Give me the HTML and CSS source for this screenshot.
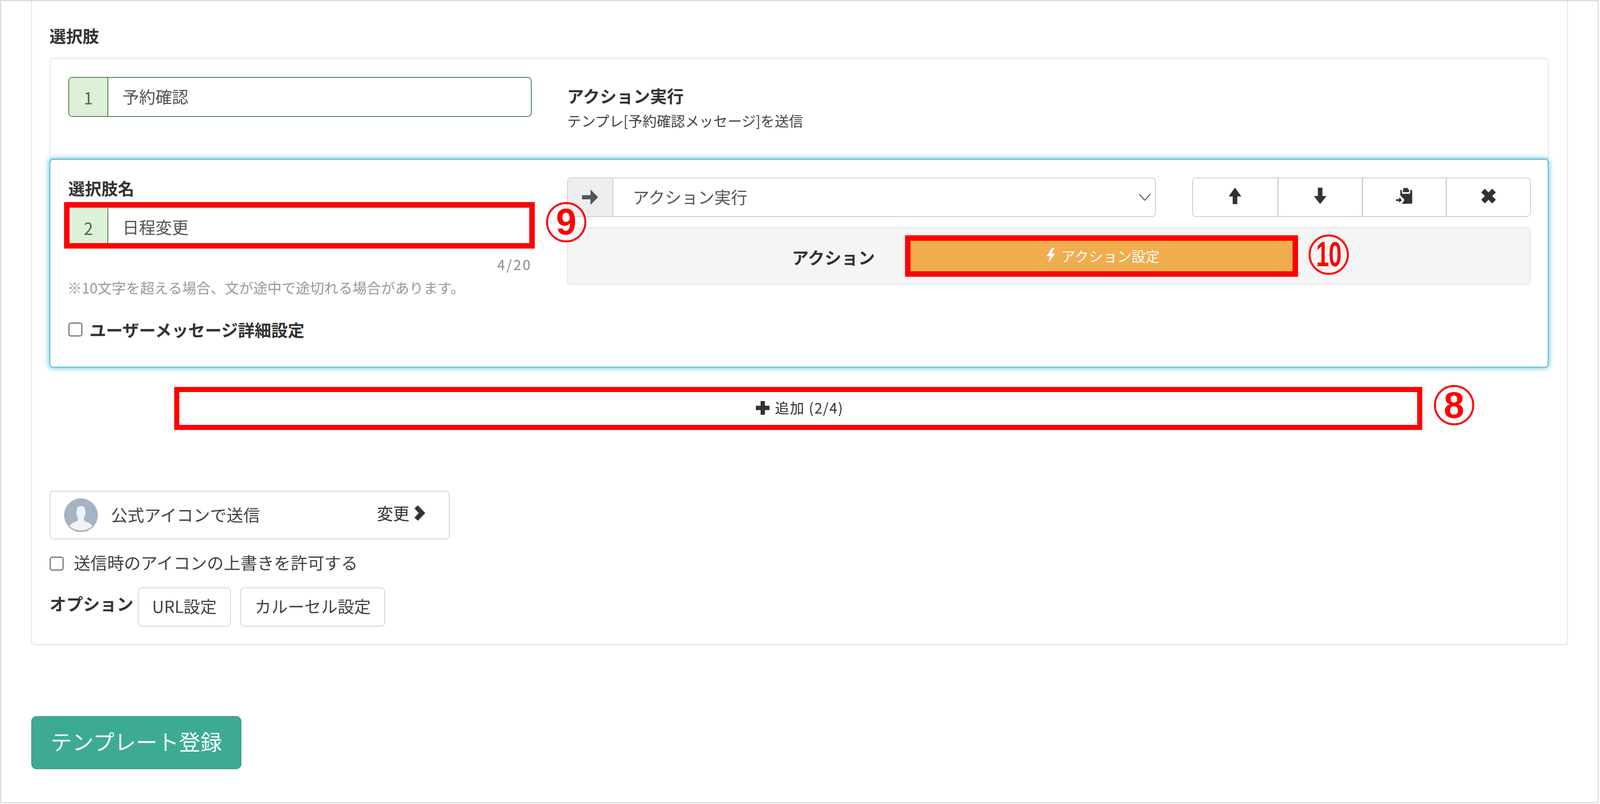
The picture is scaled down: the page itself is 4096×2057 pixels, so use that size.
FILE: index.html
```html
<!DOCTYPE html>
<html lang="ja">
<head>
<meta charset="utf-8">
<title>テンプレート登録</title>
<link rel="stylesheet" href="styles.css">
</head>
<body>
<div class="page">
  <section class="card">
    <h2 class="section-label">選択肢</h2>

    <div class="choice choice-closed">
      <div class="col-left">
        <div class="name-input success"><span class="num">1</span><span class="name-text">予約確認</span></div>
      </div>
      <div class="col-right summary">
        <div class="summary-title">アクション実行</div>
        <div class="summary-sub">テンプレ[予約確認メッセージ]を送信</div>
      </div>
    </div>

    <div class="choice choice-open">
      <div class="col-left">
        <div class="field-label">選択肢名</div>
        <div class="name-wrap">
          <div class="name-input active"><span class="num">2</span><span class="name-text">日程変更</span></div>
          <div class="mark mark-name"></div>
          <div class="badge badge-9"><span class="badge-digit">9</span></div>
        </div>
        <div class="counter">4/20</div>
        <div class="note">※10文字を超える場合、文が途中で途切れる場合があります。</div>
        <label class="detail-check"><input type="checkbox" class="check"><span>ユーザーメッセージ詳細設定</span></label>
      </div>
      <div class="col-right">
        <div class="control-row">
          <div class="select-group">
            <div class="select-addon">
              <svg class="addon-icon" viewBox="0 0 44 44"><path d="M1 16.500h22V2l20 20-20 20V27.500H1z"/></svg>
            </div>
            <div class="select-box">
              <span>アクション実行</span>
              <svg class="caret" viewBox="0 0 30 18"><path d="M1 1l14 16L29 1" fill="none" stroke="#555" stroke-width="2.500"/></svg>
            </div>
          </div>
          <div class="btn-group">
            <button class="tool" type="button"><svg class="tool-icon" viewBox="-5 0 44 44"><path d="M17 0l16.500 23H23v20H11V23H.5z"/></svg></button>
            <button class="tool" type="button"><svg class="tool-icon" viewBox="-5 0 44 44"><path d="M11 0h12v22h10.500L17 43 .5 22H11z"/></svg></button>
            <button class="tool" type="button"><svg class="tool-icon" viewBox="-1 -1 44 44"><path d="M19 0h12v4h3v7H18V4h1zM11 5h4v7c0 2 1 3 3 3h16c2 0 3-1 3-3V5h3c1 0 2 1 2 2v32c0 1-1 2-2 2H15l7-10-11-12zM0 29h8v-5l7 7.500-7 7.500v-5H0z"/></svg></button>
            <button class="tool" type="button"><svg class="tool-icon" viewBox="-3 -3 46 46"><path d="M10 0l10 10L30 0l10 10-10 10 10 10-10 10-10-10-10 10L0 30l10-10L0 10z"/></svg></button>
          </div>
        </div>
        <div class="action-panel">
          <div class="action-label">アクション</div>
          <div class="action-wrap">
            <button class="action-btn" type="button">
              <svg class="bolt" viewBox="0 0 24 38"><path d="M15 0L2 21h8L6 38l17-24h-9l8-14z"/></svg>
              <span>アクション設定</span>
            </button>
            <div class="mark mark-action"></div>
            <div class="badge badge-10"><span class="badge-digit digit-wide">10</span></div>
          </div>
        </div>
      </div>
    </div>

    <div class="add-wrap">
      <button class="add-btn" type="button">
        <svg class="plus" viewBox="0 0 35 35"><path d="M12 1c0-1 1-1 2-1h7c1 0 2 0 2 1v11h11c1 0 1 1 1 2v7c0 1 0 2-1 2H23v11c0 1-1 1-2 1h-7c-1 0-2 0-2-1V23H1c-1 0-1-1-1-2v-7c0-1 0-2 1-2h11z"/></svg>
        <span>追加 (2/4)</span>
      </button>
      <div class="mark mark-add"></div>
      <div class="badge badge-8"><span class="badge-digit">8</span></div>
    </div>

    <div class="sender">
      <svg class="avatar" viewBox="0 0 88 88">
        <circle cx="44" cy="44" r="44" fill="#a5b4c2"/>
        <path d="M44 20c-7 0-11 4-11 11l-1 8c-1 1 0 3 1 4 1 3 2 6 3 8v6c-2 3-5 4-9 5-4 1-9 4-13 10a44 44 0 0 0 60 0c-4-6-9-9-13-10-4-1-7-2-9-5v-6c1-2 2-5 3-8 1-1 2-3 1-4l-1-8c0-7-4-11-11-11z" fill="#eff2f6"/>
      </svg>
      <span class="sender-name">公式アイコンで送信</span>
      <span class="sender-change">変更<svg class="chevron" viewBox="0 0 28 40"><path d="M9 0l19 20L9 40l-9-8 11-12L0 8z"/></svg></span>
    </div>

    <label class="override-check"><input type="checkbox" class="check"><span>送信時のアイコンの上書きを許可する</span></label>

    <div class="options">
      <span class="options-label">オプション</span>
      <button class="opt-btn opt-url" type="button">URL設定</button>
      <button class="opt-btn opt-carousel" type="button">カルーセル設定</button>
    </div>
  </section>

  <button class="submit" type="button">テンプレート登録</button>
</div>
</body>
</html>
```
FILE: styles.css
```css
* { box-sizing: border-box; }
html, body { margin: 0; padding: 0; background: #fff; overflow: hidden; }
body { font-family: "Noto Sans CJK JP", "Noto Sans", sans-serif; color: #333; }
button { font-family: inherit; margin: 0; cursor: pointer; }

/* the reference is 4170 wide, the window 4096.
   Border widths are floored after zoom, hence the .1 on each of them. */
.page {
  zoom: 0.98225;
  width: 4167px;
  height: 2092px;
  border: 3.100px solid #ddd;
  font-size: 43.700px;
  display: flex;
  flex-direction: column;
  align-items: flex-start;
  padding-left: 78px;
}

.card {
  width: 4005px;
  height: 1677px;
  border: 2.100px solid #e3e3e3;
  border-top: 0;
  border-radius: 0 0 10px 10px;
  box-shadow: 0 2px 3px rgba(0,0,0,.05);
  padding: 60px 47px 0 46px;
  flex: none;
}

.section-label {
  margin: 0 0 28px;
  font-size: 43px;
  line-height: 60px;
  font-weight: 700;
}

.choice {
  display: grid;
  grid-template-columns: 1208px 2512px;
  column-gap: 92px;
  background: #fff;
}
.choice-closed {
  height: 263px;
  padding: 47px 0 0 47px;
  border: 2.100px solid #e3e3e3;
  border-radius: 10px 10px 0 0;
}
.choice-open {
  position: relative;
  height: 545px;
  margin-top: -1px;
  margin-left: -1px;
  padding: 46px 0 0 47px;
  border: 3.100px solid #6cc3e0;
  border-radius: 10px;
  box-shadow: 0 0 13px 2px rgba(91,192,222,.8);
}

.name-input {
  display: flex;
  height: 104px;
  border-radius: 10px;
  overflow: hidden;
  background: #fff;
}
.name-input.success { border: 2.100px solid #3c763d; }
.name-input.active { border: 2.100px solid #ccc; }
.num {
  width: 102px;
  flex: none;
  display: flex;
  align-items: center;
  justify-content: center;
  background: #dff0d8;
  color: #3c763d;
  border-right: 2.100px solid #3c763d;
}
.name-text {
  padding: 0 0 5px 37px;
  display: flex;
  align-items: center;
  color: #555;
  font-size: 43px;
}

.summary { padding-top: 19px; }
.summary-title { font-weight: 700; line-height: 60px; }
.summary-sub { margin-top: 10px; font-size: 37px; line-height: 50px; color: #444; }

.field-label { font-weight: 700; line-height: 54px; margin-bottom: 24px; font-size: 43px; }
.name-wrap { position: relative; }

.counter {
  margin-top: 21px;
  text-align: right;
  font-size: 36px;
  line-height: 46px;
  color: #888;
  letter-spacing: 4px;
}
.note {
  margin-top: 13px;
  margin-left: -2px;
  font-size: 37px;
  line-height: 50px;
  color: #999;
}
.detail-check {
  display: flex;
  align-items: center;
  margin-top: 56px;
  height: 56px;
  font-weight: 700;
  font-size: 43.400px;
  gap: 18px;
}
.check {
  appearance: none;
  width: 37px;
  height: 37px;
  margin: 0;
  flex: none;
  background: #fff;
  border: 3.100px solid #767676;
  border-radius: 7px;
}

.control-row { display: flex; gap: 95px; }
.select-group {
  flex: 1;
  display: flex;
  height: 103px;
  border: 2.100px solid #ccc;
  border-radius: 10px;
  overflow: hidden;
}
.select-addon {
  width: 118px;
  flex: none;
  background: #eee;
  border-right: 2.100px solid #ccc;
  display: flex;
  align-items: center;
  justify-content: center;
}
.addon-icon { width: 44px; height: 44px; fill: #555; }
.select-box {
  flex: 1;
  display: flex;
  align-items: center;
  justify-content: space-between;
  padding: 0 11px 4px 51px;
  color: #555;
  font-size: 43px;
}
.caret { width: 30px; height: 18px; margin-top: 4px; }

.btn-group {
  width: 883px;
  flex: none;
  height: 103px;
  display: grid;
  grid-template-columns: repeat(4, 1fr);
  border: 2.100px solid #ccc;
  border-radius: 10px;
  overflow: hidden;
}
.tool {
  background: #fff;
  border: 0;
  border-left: 3.100px solid #ccc;
  padding: 0 0 6px;
  display: flex;
  align-items: center;
  justify-content: center;
}
.tool:first-child { border-left: 0; }
.tool-icon { height: 44px; width: 44px; fill: #333; }

.action-panel {
  margin-top: 27px;
  height: 149px;
  display: flex;
  align-items: center;
  background: #f5f5f5;
  border: 2.100px solid #e3e3e3;
  border-radius: 8px;
}
.action-label {
  width: 800px;
  flex: none;
  text-align: right;
  font-weight: 700;
  padding-top: 4px;
}
.action-wrap { position: relative; margin-left: 86px; }
.action-btn {
  width: 1010px;
  height: 94px;
  display: flex;
  align-items: center;
  justify-content: center;
  gap: 14px;
  padding: 0 0 2px 6px;
  background: #f0ad4e;
  border: 0;
  color: #fff;
  font-size: 37px;
  white-space: nowrap;
}
.bolt { width: 26px; height: 40px; fill: #fff; }

.add-wrap {
  position: relative;
  margin: 57px 337px 0 333px;
}
.add-btn {
  width: 100%;
  height: 96px;
  display: flex;
  align-items: center;
  justify-content: center;
  gap: 14px;
  padding: 0 0 4px 6px;
  background: #fff;
  border: 2.100px solid #ccc;
  color: #333;
  font-size: 37px;
  letter-spacing: 2px;
}
.plus { width: 36px; height: 36px; fill: #333; margin-top: 4px; }

.mark {
  position: absolute;
  border: 14.300px solid #f00;
  pointer-events: none;
}
.mark-name { left: -11px; right: -8px; top: -14px; bottom: -3px; }
.mark-action { left: -7px; right: -7px; top: -7px; bottom: -7px; }
.mark-add { left: -8px; right: -7px; top: -7px; bottom: -9px; border-width: 13.300px; }

.badge {
  position: absolute;
  width: 105px;
  height: 105px;
  border: 5.100px solid #f00;
  border-radius: 50%;
  background: transparent;
  display: flex;
  align-items: center;
  justify-content: center;
}
.badge-digit {
  font-family: "Liberation Sans", sans-serif;
  font-weight: 700;
  font-size: 96px;
  line-height: 1;
  color: #f00;
}
.digit-wide { display: inline-block; transform: scaleX(.68); letter-spacing: -2px; font-size: 90px; }
.badge-9 { left: 1245px; top: -14px; }
.badge-10 { right: -139px; top: -9px; }
.badge-8 { right: -142px; top: -12px; }

.sender {
  margin-top: 168px;
  width: 1043px;
  height: 126px;
  display: flex;
  align-items: center;
  border: 2.100px solid #d4d4d4;
  border-radius: 10px;
  padding: 0 62px 0 36px;
}
.avatar { width: 88px; height: 88px; flex: none; }
.sender-name { margin-left: 34px; flex: 1; font-size: 43.400px; color: #444; margin-top: -6px; }
.sender-change {
  display: flex;
  align-items: center;
  gap: 13px;
  color: #333;
  font-size: 42.500px;
  margin-top: -12px;
}
.chevron { width: 28px; height: 40px; fill: #333; }

.override-check {
  display: flex;
  align-items: center;
  gap: 26px;
  margin-top: 45px;
  height: 36px;
  color: #444;
}
.override-check span { margin-top: -9px; }

.options {
  display: flex;
  align-items: flex-start;
  margin-top: 44px;
}
.options-label { font-weight: 700; line-height: 60px; width: 230px; margin-top: 11px; flex: none; }
.opt-btn {
  height: 102px;
  padding: 0 0 7px;
  background: #fff;
  border: 2.100px solid #d4d4d4;
  border-radius: 10px;
  color: #444;
  font-size: 43.200px;
}
.opt-url { width: 243px; }
.opt-carousel { width: 378px; margin-left: 24px; }

.submit {
  margin-top: 185px;
  width: 548px;
  height: 139px;
  flex: none;
  background: #3dab94;
  border: 2.100px solid #36a08a;
  border-radius: 14px;
  color: #fff;
  font-size: 56px;
  padding: 0 0 10px;
}
```
